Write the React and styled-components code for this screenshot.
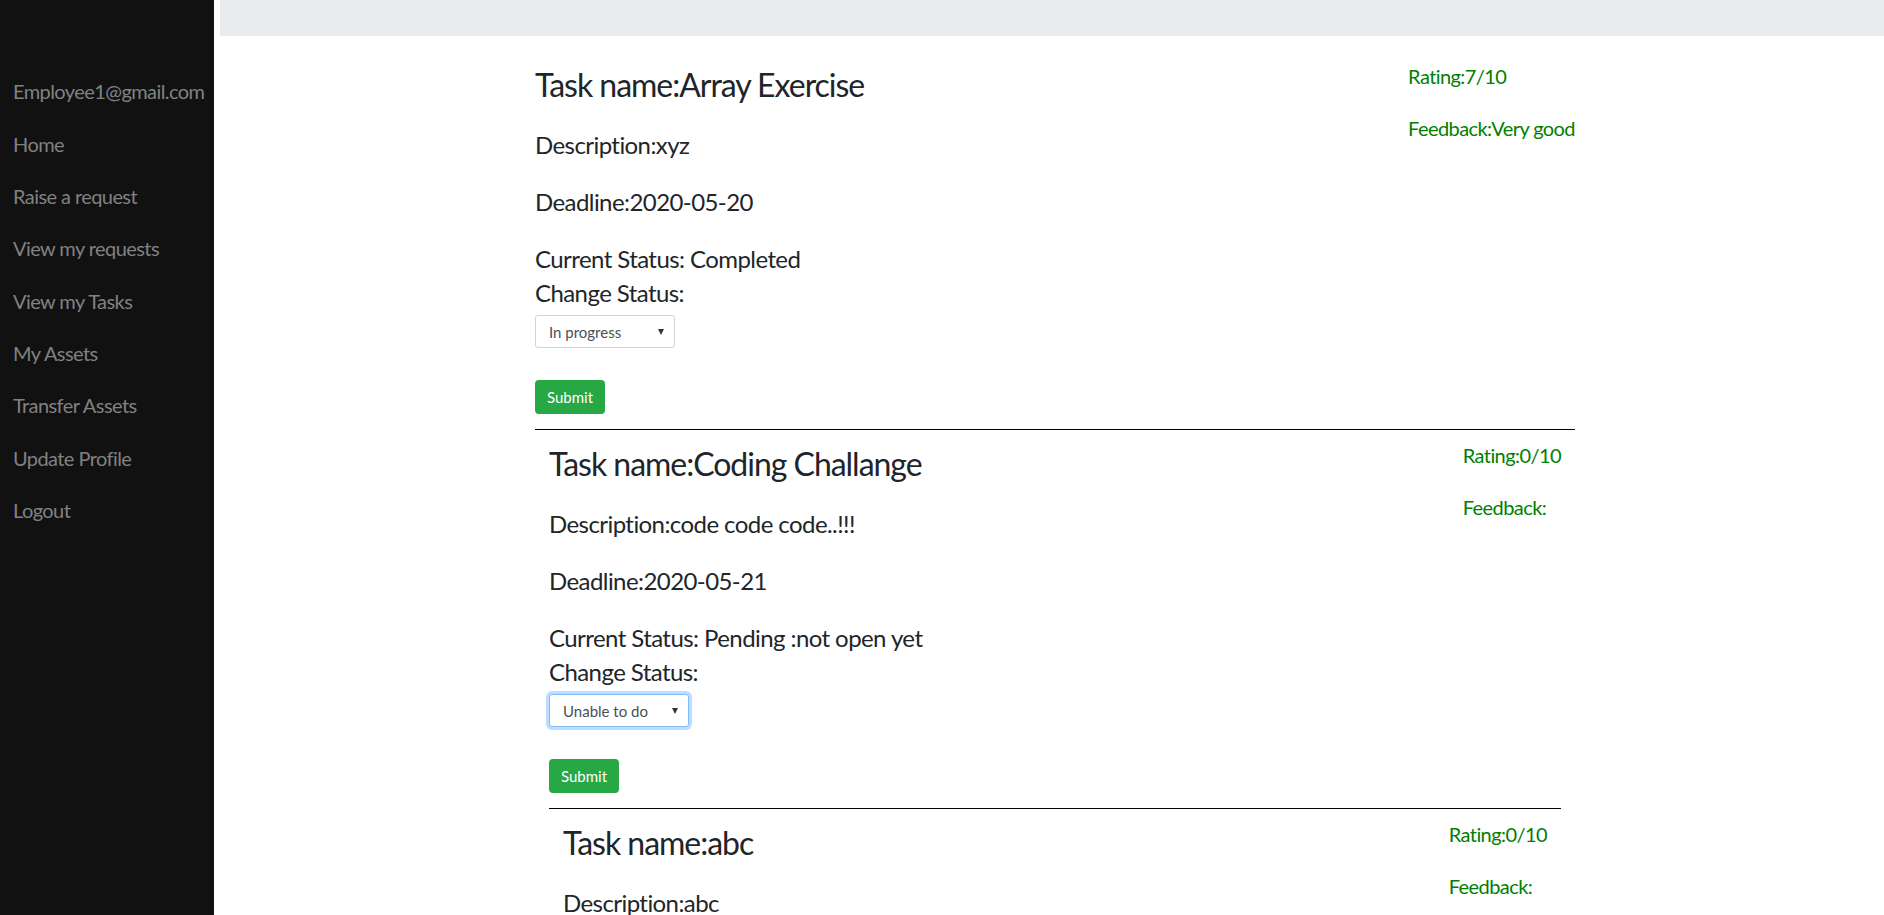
import React from 'react';
import styled, { createGlobalStyle } from 'styled-components';

const GlobalStyle = createGlobalStyle`
  html, body {
    margin: 0;
    padding: 0;
  }
  body {
    font-family: Lato, "Open Sans", Arial, sans-serif;
    color: #212529;
    background: #fff;
    letter-spacing: -0.036em;
  }
  * {
    box-sizing: border-box;
  }
`;

const navItems = [
    'Employee1@gmail.com',
    'Home',
    'Raise a request',
    'View my requests',
    'View my Tasks',
    'My Assets',
    'Transfer Assets',
    'Update Profile',
    'Logout',
];

const tasks = [
    {
        name: 'Array Exercise',
        description: 'xyz',
        deadline: '2020-05-20',
        status: 'Completed',
        choice: 'In progress',
        rating: '7/10',
        feedback: 'Very good',
    },
    {
        name: 'Coding Challange',
        description: 'code code code..!!!',
        deadline: '2020-05-21',
        status: 'Pending :not open yet',
        choice: 'Unable to do',
        rating: '0/10',
        feedback: '',
        focused: true,
    },
    {
        name: 'abc',
        description: 'abc',
        deadline: '2020-05-22',
        status: 'Pending :not open yet',
        choice: 'In progress',
        rating: '0/10',
        feedback: '',
    },
];

const statusOptions = ['Pending :not open yet', 'In progress', 'Completed', 'Unable to do'];

// each task sits inside the one before it, so the panels step inwards
const TaskList = ({ items }) => {
    if (!items.length) return null;
    const [task, ...rest] = items;

    return (
        <TaskCard>
            <RatingBox>
                <RatingLine>Rating:{task.rating}</RatingLine>
                <RatingLine>Feedback:{task.feedback}</RatingLine>
            </RatingBox>
            <TaskTitle>Task name:{task.name}</TaskTitle>
            <Field>Description:{task.description}</Field>
            <Field>Deadline:{task.deadline}</Field>
            <StatusLine>Current Status: {task.status}</StatusLine>
            <StatusLine>Change Status:</StatusLine>
            <SelectWrap>
                <StatusSelect defaultValue={task.choice} $focused={task.focused}>
                    {statusOptions.map((o) => (
                        <option key={o} value={o}>{o}</option>
                    ))}
                </StatusSelect>
            </SelectWrap>
            <SubmitButton type="button">Submit</SubmitButton>
            <Divider />
            {rest.length > 0 && (
                <Nested>
                    <TaskList items={rest} />
                </Nested>
            )}
        </TaskCard>
    );
};

const App = () => {
    return (
        <>
            <GlobalStyle />
            <Page>
                <Sidebar>
                    {navItems.map((item) => (
                        <NavLink key={item} href="#">{item}</NavLink>
                    ))}
                </Sidebar>
                <Main>
                    <TopBar />
                    <Content>
                        <TaskList items={tasks} />
                    </Content>
                </Main>
            </Page>
        </>
    );
};

const Page = styled.div`
    display: flex;
    height: 100vh;
    overflow: hidden;
`;

const Sidebar = styled.nav`
    width: 214px;
    flex-shrink: 0;
    background: #111;
    padding-top: 65px;
`;

const NavLink = styled.a`
    display: block;
    padding: 11.2px 13px;
    font-size: 20px;
    line-height: 30px;
    color: #818181;
    text-decoration: none;
    white-space: nowrap;
`;

const Main = styled.main`
    flex: 1;
    margin-left: 6px;
    overflow: hidden;
`;

const TopBar = styled.div`
    height: 36px;
    background: #e9ecef;
`;

const Content = styled.div`
    width: 1040px;
    margin-left: calc(50% - 517px);
    padding-top: 30px;
`;

const TaskCard = styled.div``;

const Nested = styled.div`
    padding: 0 14px;
`;

const RatingBox = styled.div`
    float: right;
    margin-top: -2px;
    color: #008000;
    font-size: 20px;
    line-height: 24px;
    white-space: nowrap;
`;

const RatingLine = styled.div`
    & + & {
        margin-top: 28px;
    }
`;

const TaskTitle = styled.h2`
    margin: 0 0 24px;
    font-size: 32px;
    font-weight: 400;
    line-height: 38px;
    letter-spacing: -0.032em;
`;

const Field = styled.p`
    margin: 0 0 23px;
    font-size: 24px;
    line-height: 34px;
`;

const StatusLine = styled.div`
    font-size: 24px;
    line-height: 34px;
`;

const SelectWrap = styled.div`
    position: relative;
    width: 140px;
    margin-top: 5px;

    &::after {
        content: '';
        position: absolute;
        right: 11px;
        top: 14px;
        border-left: 3.5px solid transparent;
        border-right: 3.5px solid transparent;
        border-top: 6px solid #333;
        pointer-events: none;
    }
`;

const StatusSelect = styled.select`
    display: block;
    width: 140px;
    height: 33px;
    padding: 0 26px 0 13px;
    border: 1px solid ${(p) => (p.$focused ? '#80bdff' : '#ced4da')};
    border-radius: 3px;
    box-shadow: ${(p) => (p.$focused ? '0 0 0 3px rgba(0, 123, 255, 0.25)' : 'none')};
    background: #fff;
    color: #495057;
    font-family: Lato, "Open Sans", sans-serif;
    font-size: 15px;
    letter-spacing: 0;
    appearance: none;
    -webkit-appearance: none;
    outline: none;
`;

const SubmitButton = styled.button`
    display: block;
    margin-top: 32px;
    height: 34px;
    padding: 0 12px;
    background: #28a745;
    color: #fff;
    border: none;
    border-radius: 4px;
    font-family: Lato, "Open Sans", sans-serif;
    font-size: 15px;
    letter-spacing: 0;
`;

const Divider = styled.hr`
    clear: both;
    margin: 15px 0 15px;
    border: 0;
    border-top: 1px solid #000;
`;

export default App;
